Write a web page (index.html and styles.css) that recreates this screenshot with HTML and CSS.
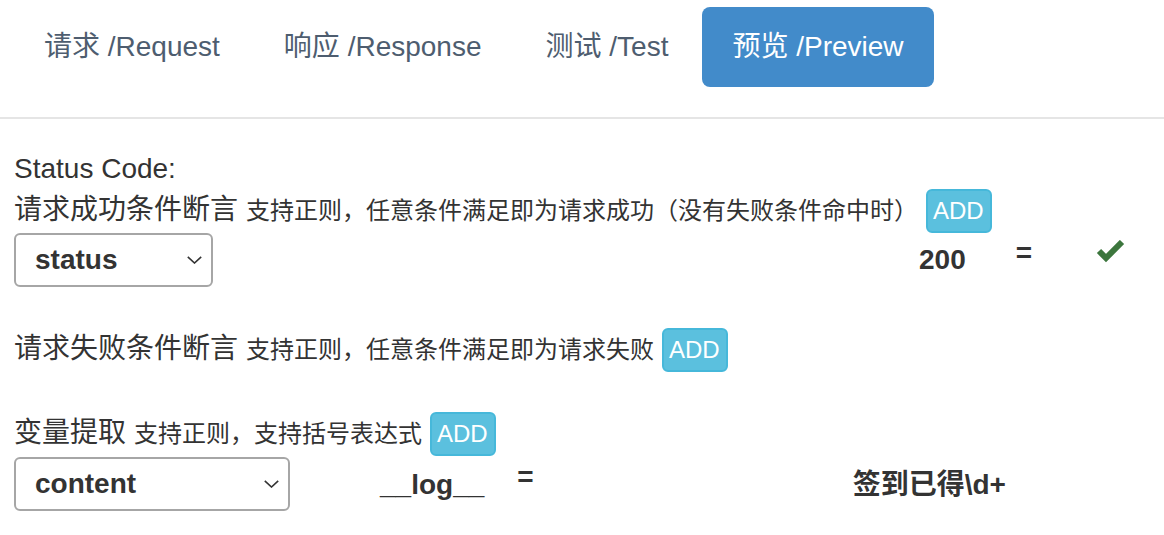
FILE: index.html
```html
<!DOCTYPE html>
<html lang="zh-CN">
<head>
<meta charset="utf-8">
<title>Preview</title>
<link rel="stylesheet" href="styles.css">
</head>
<body>
<nav class="tabs">
  <a class="tab">请求 /Request</a>
  <a class="tab">响应 /Response</a>
  <a class="tab">测试 /Test</a>
  <a class="tab active">预览 /Preview</a>
</nav>
<main class="content">
  <div class="line">Status Code:</div>
  <div class="head">
    <span class="title">请求成功条件断言</span>
    <span class="hint">支持正则，任意条件满足即为请求成功（没有失败条件命中时）</span>
    <span class="btn-add">ADD</span>
  </div>
  <div class="row">
    <div class="select select-status">
      <span>status</span>
      <svg class="chev" width="15" height="8" viewBox="0 0 15 8"><path d="M0.8 0.8 L7.5 7 L14.2 0.8" fill="none" stroke="#333" stroke-width="1.6"/></svg>
    </div>
    <span class="val val-200">200</span>
    <span class="eq eq-1">=</span>
    <svg class="check" width="29" height="23" viewBox="0 0 29 23"><polyline points="3,11 10,18 26,2" fill="none" stroke="#3c763d" stroke-width="6" stroke-linejoin="miter"/></svg>
  </div>

  <div class="head gap">
    <span class="title">请求失败条件断言</span>
    <span class="hint">支持正则，任意条件满足即为请求失败</span>
    <span class="btn-add">ADD</span>
  </div>

  <div class="head gap">
    <span class="title">变量提取</span>
    <span class="hint">支持正则，支持括号表达式</span>
    <span class="btn-add">ADD</span>
  </div>
  <div class="row row-var">
    <div class="select select-content">
      <span>content</span>
      <svg class="chev" width="15" height="8" viewBox="0 0 15 8"><path d="M0.8 0.8 L7.5 7 L14.2 0.8" fill="none" stroke="#333" stroke-width="1.6"/></svg>
    </div>
    <span class="val val-log">__log__</span>
    <span class="eq eq-2">=</span>
    <span class="val val-re">签到已得\d+</span>
  </div>
</main>
</body>
</html>
```
FILE: styles.css
```css
html, body {
  margin: 0;
  padding: 0;
  background: #fff;
}
body {
  font-family: "Liberation Sans", Arial, "Noto Sans CJK SC", sans-serif;
  font-size: 28px;
  line-height: 40px;
  color: #333;
}
.tabs {
  display: flex;
  gap: 4px;
  padding: 7px 14px 30px;
  border-bottom: 2px solid #e5e5e5;
}
.tab {
  display: block;
  padding: 20px 30px;
  line-height: 40px;
  font-size: 28px;
  color: #4e5d6f;
  border-radius: 8px;
}
.tab.active {
  background: #428bca;
  color: #fff;
}
.content {
  padding: 30px 14px 0;
}
.line {
  height: 40px;
}
.head {
  display: flex;
  align-items: baseline;
}
.head.gap {
  margin-top: 41px;
}
.head + .head.gap {
  margin-top: 40px;
}
.title {
  font-size: 28px;
  line-height: 40px;
}
.hint {
  font-size: 24px;
  line-height: 40px;
  margin-left: 8px;
}
.btn-add {
  display: inline-block;
  margin-left: 8px;
  padding: 2px 6px 2px 5px;
  font-size: 24px;
  line-height: 36px;
  color: #fff;
  background: #5bc0de;
  border: 2px solid #46b8da;
  border-radius: 6px;
}
.row {
  display: flex;
  align-items: flex-start;
}
.row-var {
  margin-top: 1px;
}
.select {
  box-sizing: border-box;
  height: 54px;
  display: flex;
  align-items: center;
  justify-content: space-between;
  padding: 0 9px 0 19px;
  border: 2px solid #a6a6a6;
  border-radius: 6px;
  font-weight: bold;
  font-size: 28px;
  background: #fff;
}
.select-status { width: 199px; }
.select-content { width: 276px; }
.chev { display: block; }
.val {
  font-weight: bold;
  margin-top: 7px;
  line-height: 40px;
}
.val-200 { margin-left: 706px; }
.eq {
  font-weight: bold;
  line-height: 40px;
}
.eq-1 { margin-left: 50px; }
.check {
  display: block;
  margin-left: 64px;
  margin-top: 7px;
}
.val-log { margin-left: 90px; margin-top: 8px; }
.eq-2 { margin-left: 33px; }
.val-re { margin-left: 319px; margin-top: 8px; }
```
